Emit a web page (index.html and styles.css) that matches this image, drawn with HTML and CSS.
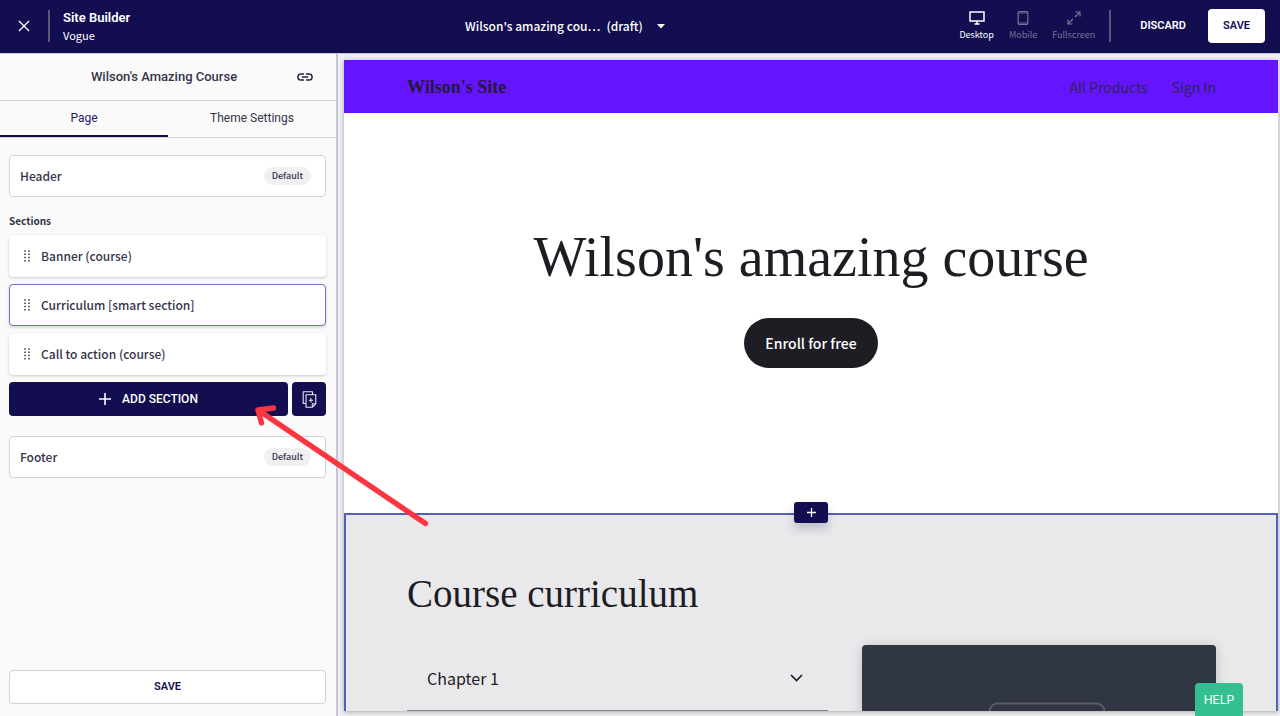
FILE: index.html
```html
<!DOCTYPE html>
<html lang="en">
<head>
<meta charset="utf-8">
<title>Site Builder</title>
<link rel="stylesheet" href="styles.css">
</head>
<body>
<div class="app">
  <header class="topbar">
    <div class="topbar-left">
      <button class="icon-btn close" aria-label="Close"><svg width="12" height="12" viewBox="0 0 12 12"><path d="M1 1l10 10M11 1L1 11" stroke="#fff" stroke-width="1.4" fill="none"/></svg></button>
      <span class="divider"></span>
      <div class="brand"><div class="brand-name">Site Builder</div><div class="brand-theme">Vogue</div></div>
    </div>
    <button class="page-picker"><span>Wilson's amazing cou…</span><span>(draft)</span><svg width="8" height="5" viewBox="0 0 8 5"><path d="M0 0h8L4 4.6z" fill="#fff"/></svg></button>
    <div class="topbar-right">
      <nav class="views">
        <button class="view active"><svg width="16" height="14" viewBox="0 0 16 14"><path d="M1 1h14v9H1zM8 10v3M5.500 13h5" stroke="currentColor" stroke-width="1.500" fill="none"/></svg><span>Desktop</span></button>
        <button class="view"><svg width="12" height="14" viewBox="0 0 12 14"><rect x="1.200" y=".7" width="9.600" height="12.600" rx="1" stroke="currentColor" stroke-width="1.200" fill="none"/><path d="M1 2h10M1 12h10" stroke="currentColor" stroke-width=".8"/></svg><span>Mobile</span></button>
        <button class="view"><svg width="16" height="14" viewBox="0 0 16 14"><path d="M9.500 1H14v4.500M14 1L9 6M6.500 13H2V8.500M2 13l5-5" stroke="currentColor" stroke-width="1.200" fill="none"/></svg><span>Fullscreen</span></button>
      </nav>
      <span class="divider"></span>
      <button class="discard">DISCARD</button>
      <button class="save-top">SAVE</button>
    </div>
  </header>
  <div class="workspace">
    <aside class="sidebar">
      <div class="side-title">
        <h1>Wilson's Amazing Course</h1>
        <button class="icon-btn link" aria-label="Copy link"><svg width="16" height="8" viewBox="0 0 16 8"><path d="M7 .9H4a3.100 3.100 0 0 0 0 6.200h3M9 .9h3a3.100 3.100 0 0 1 0 6.200H9M4.800 4h6.400" stroke="#27263f" stroke-width="1.500" fill="none"/></svg></button>
      </div>
      <div class="tabs" role="tablist">
        <button class="tab selected" role="tab" aria-selected="true">Page</button>
        <button class="tab" role="tab" aria-selected="false">Theme Settings</button>
      </div>
      <div class="panel">
        <button class="card outlined"><span>Header</span><span class="badge">Default</span></button>
        <h2>Sections</h2>
        <div class="sections">
          <button class="card"><svg class="grip" width="6" height="12" viewBox="0 0 6 12"><path d="M1 .2v12M5 .2v12" stroke="#35344a" stroke-width="1.500" stroke-dasharray="1.500 1.800"/></svg><span>Banner (course)</span></button>
          <button class="card current"><svg class="grip" width="6" height="12" viewBox="0 0 6 12"><path d="M1 .2v12M5 .2v12" stroke="#35344a" stroke-width="1.500" stroke-dasharray="1.500 1.800"/></svg><span>Curriculum [smart section]</span></button>
          <button class="card"><svg class="grip" width="6" height="12" viewBox="0 0 6 12"><path d="M1 .2v12M5 .2v12" stroke="#35344a" stroke-width="1.500" stroke-dasharray="1.500 1.800"/></svg><span>Call to action (course)</span></button>
          <div class="actions">
            <button class="add"><svg width="12" height="12" viewBox="0 0 12 12"><path d="M6 0v12M0 6h12" stroke="#fff" stroke-width="1.600"/></svg><span>ADD SECTION</span></button>
            <button class="paste" aria-label="Paste section"><svg width="15" height="17" viewBox="0 0 15 17"><path d="M3.500 12.500H1.200V.7h9.300v2.500M4 3.700h9.800v9l-3.500 3.600H4zM13.800 12.700h-3.500v3.600M8.900 7v4.500M6.700 9.200h4.500" stroke="#e6e5f2" stroke-width="1.100" fill="none" stroke-linejoin="round"/></svg></button>
          </div>
        </div>
        <button class="card outlined"><span>Footer</span><span class="badge">Default</span></button>
      </div>
      <div class="side-foot"><button class="save-side">SAVE</button></div>
    </aside>
    <main class="preview">
      <div class="site">
        <header class="site-header">
          <a class="site-name" href="#">Wilson's Site</a>
          <nav class="site-nav"><a href="#">All Products</a><a href="#">Sign In</a></nav>
        </header>
        <section class="hero">
          <h2>Wilson's amazing course</h2>
          <button class="enroll">Enroll for free</button>
        </section>
        <section class="curriculum">
          <button class="insert" aria-label="Insert section"><svg width="9" height="9" viewBox="0 0 9 9"><path d="M4.500 0v9M0 4.500h9" stroke="#fff" stroke-width="1.300"/></svg></button>
          <h2>Course curriculum</h2>
          <div class="columns">
            <button class="chapter"><span>Chapter 1</span><svg width="13" height="8" viewBox="0 0 13 8"><path d="M1 1l5.500 5.500L12 1" stroke="#1e1d24" stroke-width="1.700" fill="none"/></svg></button>
            <div class="media"><svg width="118" height="90" viewBox="0 0 118 90"><rect x="1.500" y="1.500" width="115" height="87" rx="8" stroke="#5c5d68" stroke-width="2" fill="none"/></svg></div>
          </div>
        </section>
      </div>
    </main>
  </div>
</div>
<button class="help">HELP</button>
<svg class="pointer" width="176" height="124" viewBox="0 0 176 124"><path d="M172.500 120.500L5 7M5 7l15.500-2M5 7l3.500 13" stroke="#fb3640" stroke-width="5.400" stroke-linecap="round" stroke-linejoin="round" fill="none"/></svg>
</body>
</html>
```
FILE: styles.css
```css
* { box-sizing: border-box; }
body { margin: 0; font-family: "Noto Sans CJK JP", "Noto Sans", sans-serif; color: #35344a; }
button { font: inherit; color: inherit; border: 0; padding: 0; margin: 0; background: none; cursor: pointer; }
h1, h2 { margin: 0; }
a { color: inherit; text-decoration: none; }
svg { display: block; flex: none; }
.app { height: 100vh; display: flex; flex-direction: column; overflow: hidden; }
.topbar { flex: none; height: 53px; padding-bottom: 1px; background: #120e50; color: #fff; display: flex; align-items: center; }
.topbar-left { width: 336px; padding-left: 18px; display: flex; align-items: center; }
.divider { width: 2px; height: 32px; background: #5b5876; }
.close { margin-right: 18px; }
.brand { margin-left: 13px; }
.brand-name { font: 600 13px/18px Roboto, sans-serif; }
.brand-theme { font-size: 11px; line-height: 16px; }
.page-picker { margin-left: 129px; display: flex; align-items: center; gap: 6px; font-size: 12px; font-weight: 500; line-height: 20px; }
.page-picker svg { margin-left: 8px; }
.topbar-right { margin-left: auto; padding-right: 15px; display: flex; align-items: center; }
.views { display: flex; gap: 15px; margin-right: 14px; }
.view { display: flex; flex-direction: column; align-items: center; gap: 3px; font-size: 9px; line-height: 14px; color: #77758f; }
.view.active { color: #fff; }
.discard { margin: 0 22px 0 29px; font: 600 11px/20px Roboto, sans-serif; }
.save-top { width: 57px; height: 34px; border-radius: 4px; background: #fff; color: #120e50; font: 600 11px/20px Roboto, sans-serif; }
.workspace { flex: 1; min-height: 0; display: flex; background: #f0f0f2; border-top: 1px solid #c9c7d6; }
.sidebar { flex: none; width: 338px; background: #fafafa; border-right: 2px solid #c4c5d6; display: flex; flex-direction: column; }
.side-title { height: 47px; padding: 0 23px 0 31px; display: flex; align-items: center; border-bottom: 1px solid #d4d4dc; }
.side-title h1 { flex: 1; text-align: center; font: 500 13px/20px Roboto, sans-serif; }
.tabs { display: grid; grid-template-columns: 1fr 1fr; height: 37px; border-bottom: 1px solid #d4d4dc; }
.tab { font: 400 12px/20px Roboto, sans-serif; border-bottom: 2px solid transparent; }
.tab.selected { color: #241a6b; border-bottom-color: #120e50; }
.panel { padding: 17px 10px 0 9px; }
.card { width: 100%; height: 42px; padding: 0 14px 0 11px; background: #fff; border-radius: 4px; display: flex; align-items: center; text-align: left; font-size: 12px; font-weight: 500; line-height: 18px; box-shadow: 0 1px 3px #00000030; border: 1px solid transparent; }
.card.outlined { box-shadow: none; border-color: #d1d1d9; padding-left: 10px; justify-content: space-between; }
.card.current { border-color: #6b78c9; }
.grip { margin: 0 11px 0 3px; }
.badge { background: #f0f0f3; border-radius: 9px; padding: 0 8px; font-size: 9px; line-height: 18px; }
.panel h2 { margin: 15px 0 5px; font-size: 10px; font-weight: 700; line-height: 18px; }
.sections { display: flex; flex-direction: column; gap: 7px; margin-bottom: 20px; }
.actions { display: flex; gap: 4px; }
.add { flex: 1; height: 34px; background: #120e50; color: #fff; border-radius: 4px; display: flex; align-items: center; justify-content: center; gap: 11px; font: 500 12px/20px Roboto, sans-serif; }
.paste { width: 34px; height: 34px; background: #120e50; border-radius: 4px; display: flex; align-items: center; justify-content: center; }
.side-foot { margin-top: auto; padding: 0 10px 12px 9px; }
.save-side { width: 100%; height: 34px; border: 1px solid #d1d1d9; border-radius: 4px; background: #fff; color: #120e50; font: 600 11px/20px Roboto, sans-serif; }
.preview { flex: 1; min-width: 0; padding: 6px 2px 5px 6px; display: flex; }
.site { flex: 1; overflow: hidden; background: #fff; box-shadow: 0 1px 5px #0000004d; color: #1e1d24; }
.site-header { height: 53px; padding: 0 62px 0 63px; background: #6414ff; display: flex; align-items: center; justify-content: space-between; }
.site-name { font: 700 18px/24px "Liberation Serif", serif; color: #241b38; }
.site-nav { display: flex; gap: 24px; font-size: 14px; line-height: 22px; color: #2d2552; }
.hero { height: 400px; display: flex; flex-direction: column; align-items: center; padding-top: 108px; }
.hero h2 { font: 400 56px/72px "Liberation Serif", serif; }
.enroll { margin-top: 25px; height: 50px; padding: 0 21px; border-radius: 25px; background: #1e1d24; color: #fff; font-size: 14px; font-weight: 500; }
.curriculum { position: relative; height: 400px; padding: 57px 60px 0 61px; background: #e9e9eb; border: 2px solid #5361b8; }
.insert { position: absolute; top: -13px; left: 50%; margin-left: -17px; width: 34px; height: 21px; border-radius: 3px; background: #120e50; display: flex; align-items: center; justify-content: center; box-shadow: 0 6px 10px #120e5030; }
.curriculum h2 { font: 400 39px/44px "Liberation Serif", serif; }
.columns { margin-top: 29px; display: grid; grid-template-columns: minmax(0, 421fr) minmax(0, 354fr); gap: 34px; align-items: start; }
.chapter { height: 66px; padding: 0 25px 0 20px; border-bottom: 1px solid #85848c; display: flex; align-items: center; justify-content: space-between; font-size: 16px; }
.media { height: 200px; padding: 57px 0 0 16px; background: #303644; border-radius: 4px; box-shadow: 0 2px 12px #0000002e; display: flex; justify-content: center; }
.help { position: fixed; right: 37px; bottom: 0; width: 48px; height: 33px; border-radius: 4px 4px 0 0; background: #33bf92; color: #fff; font: 400 12px/33px Inter, sans-serif; }
.pointer { position: fixed; left: 253px; top: 403px; pointer-events: none; }
```
